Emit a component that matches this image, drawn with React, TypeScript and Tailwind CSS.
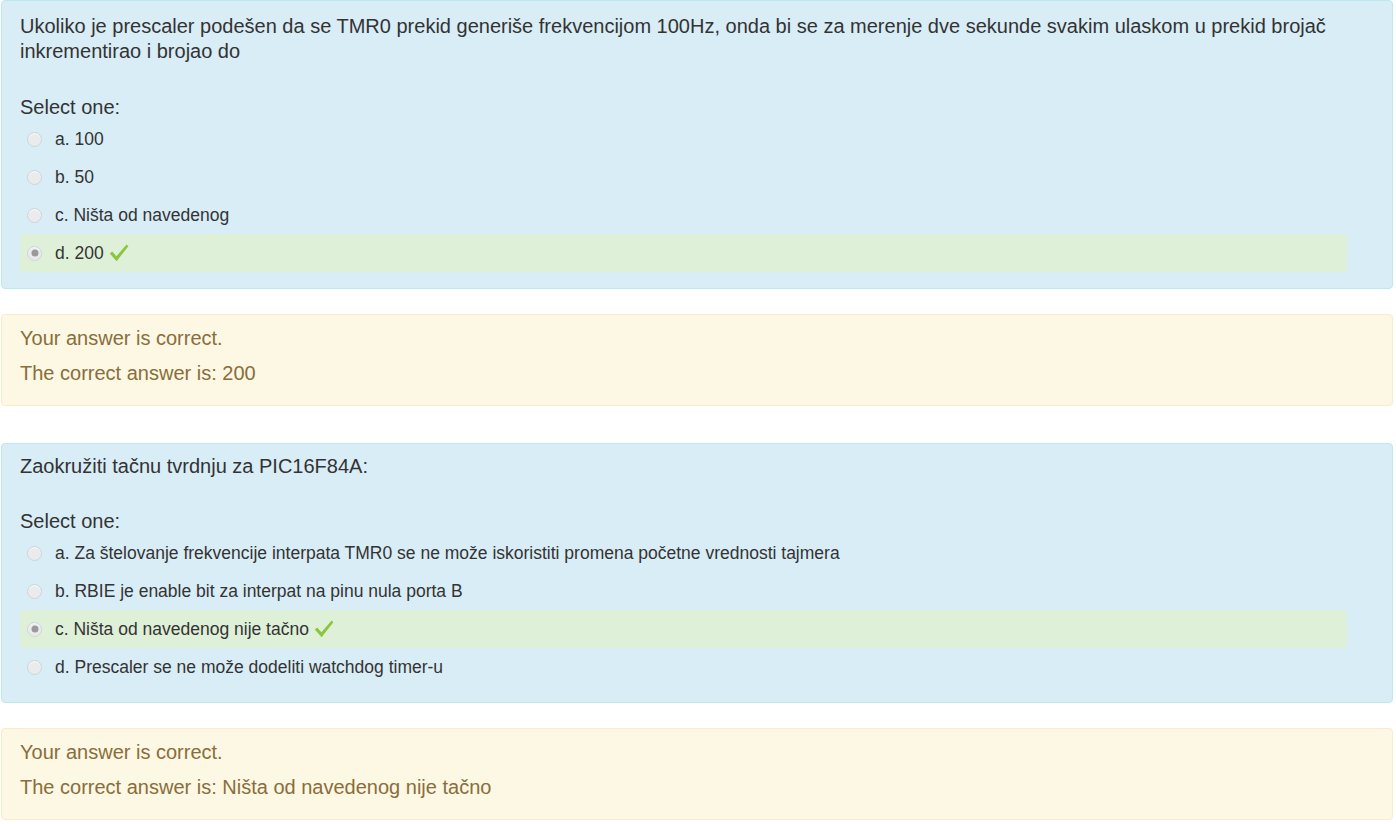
import React from "react";

type Opt = { label: string; checked?: boolean };

function Radio({ checked }: { checked?: boolean }) {
  return (
    <span className="relative ml-[7px] mr-[13px] inline-block h-[15px] w-[15px] shrink-0 rounded-full border border-[#cfd3d6] bg-[#e9ebed] shadow-[inset_0_1px_1px_rgba(255,255,255,0.8)]">
      {checked && (
        <span className="absolute left-1/2 top-1/2 h-[7px] w-[7px] -translate-x-1/2 -translate-y-1/2 rounded-full bg-[#9a9a9a]" />
      )}
    </span>
  );
}

function Check() {
  return (
    <svg width="20" height="18" viewBox="0 0 20 18" className="ml-[5px]">
      <path
        d="M0.8 9.6 L3.2 7.6 L7.4 12.2 L17.6 0.6 L19.4 2.2 L7.6 17.2 Z"
        fill="#8cc63e"
      />
    </svg>
  );
}

function Question({
  text,
  options,
  pad,
  gap,
}: {
  text: string;
  options: Opt[];
  pad: string;
  gap: string;
}) {
  return (
    <div
      className={`ml-[1px] w-[1392px] rounded-[4px] border border-[#bce8f1] bg-[#d9edf7] pl-[18px] pr-[18px] text-[#333333] ${pad}`}
    >
      <div className="text-[20px] leading-[25px]">{text}</div>
      <div className={`text-[20px] leading-[25px] ${gap}`}>Select one:</div>
      <div className="mr-[27px] flex flex-col">
        {options.map((o) => (
          <div
            key={o.label}
            className={`flex h-[38px] items-center rounded-[3px] text-[17.5px] ${
              o.checked ? "bg-[#dff0d8]" : ""
            }`}
          >
            <Radio checked={o.checked} />
            <span>{o.label}</span>
            {o.checked && <Check />}
          </div>
        ))}
      </div>
    </div>
  );
}

function Feedback({ answer }: { answer: string }) {
  return (
    <div className="ml-[1px] w-[1392px] rounded-[4px] border border-[#faebcc] bg-[#fcf8e3] px-[18px] pt-[11px] pb-[19px] text-[20px] leading-[25px] text-[#8a6d3b]">
      <p>Your answer is correct.</p>
      <p className="mt-[10px]">The correct answer is: {answer}</p>
    </div>
  );
}

export default function App() {
  return (
    <div
      className="min-h-[824px] bg-white"
      style={{ fontFamily: '"Liberation Sans", Arial, sans-serif' }}
    >
      <Question
        pad="pt-[13px] pb-[16px]"
        gap="mt-[31px]"
        text="Ukoliko je prescaler podešen da se TMR0 prekid generiše frekvencijom 100Hz, onda bi se za merenje dve sekunde svakim ulaskom u prekid brojač inkrementirao i brojao do"
        options={[
          { label: "a. 100" },
          { label: "b. 50" },
          { label: "c. Ništa od navedenog" },
          { label: "d. 200", checked: true },
        ]}
      />
      <div className="h-[25px]" />
      <Feedback answer="200" />
      <div className="h-[37px]" />
      <Question
        pad="pt-[10px] pb-[16px]"
        gap="mt-[30px]"
        text="Zaokružiti tačnu tvrdnju za PIC16F84A:"
        options={[
          {
            label:
              "a. Za štelovanje frekvencije interpata TMR0 se ne može iskoristiti promena početne vrednosti tajmera",
          },
          { label: "b. RBIE je enable bit za interpat na pinu nula porta B" },
          { label: "c. Ništa od navedenog nije tačno", checked: true },
          { label: "d. Prescaler se ne može dodeliti watchdog timer-u" },
        ]}
      />
      <div className="h-[25px]" />
      <Feedback answer="Ništa od navedenog nije tačno" />
    </div>
  );
}
